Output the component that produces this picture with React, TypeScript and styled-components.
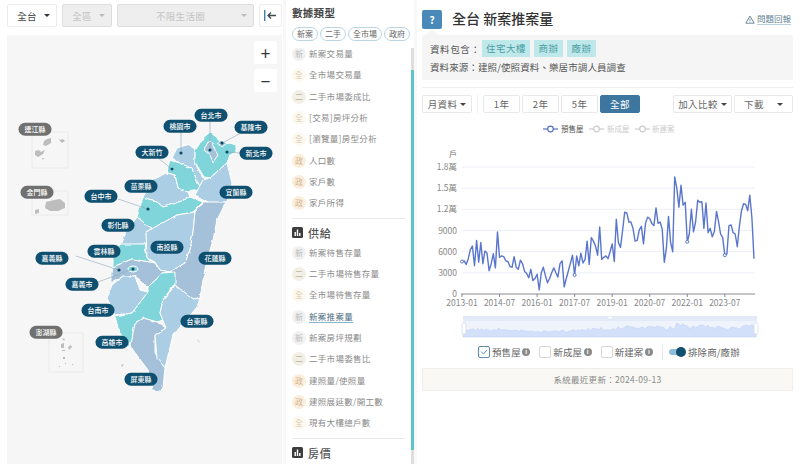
import React from "react"
import styled, { createGlobalStyle } from "styled-components"

const GlobalStyle = createGlobalStyle`
  html, body {
    margin: 0;
    padding: 0;
    background: #f8f8f8;
    font-family: "Noto Sans CJK TC", "Noto Sans", sans-serif;
    color: #555;
  }
  * { box-sizing: border-box; }
`

const Page = styled.div`
  display: flex;
  width: 800px;
  height: 464px;
  overflow: hidden;
  gap: 3px;
`

/* left column */
const LeftColumn = styled.div`
  width: 283px;
  background: #fff;
  padding: 4px 1px 0 7px;
  display: flex;
  flex-direction: column;
  gap: 8px;
`

const FilterBar = styled.div`
  display: flex;
  gap: 5px;
`

const SelectBox = styled.div<{ $w: number; $disabled?: boolean }>`
  width: ${(p) => p.$w}px;
  height: 23px;
  display: flex;
  align-items: center;
  justify-content: center;
  position: relative;
  font-size: 9.5px;
  letter-spacing: 0.3px;
  color: ${(p) => (p.$disabled ? "#c4c4c4" : "#444")};
  background: ${(p) => (p.$disabled ? "#eee" : "#fff")};
  border: 1px solid ${(p) => (p.$disabled ? "#ddd" : "#ececec")};
  border-radius: 2px;
  padding-right: 10px;
  &::after {
    content: "";
    position: absolute;
    right: 6px;
    top: 9px;
    border-left: 3px solid transparent;
    border-right: 3px solid transparent;
    border-top: 3px solid ${(p) => (p.$disabled ? "#bbb" : "#333")};
  }
`

const CollapseButton = styled.div`
  width: 23px;
  height: 23px;
  border: 1px solid #ececec;
  border-radius: 2px;
  display: flex;
  align-items: center;
  justify-content: center;
`

const MapPanel = styled.div`
  position: relative;
  flex: 1;
  background: #f6f6f6;
`

const MapDrawing = styled.svg`
  display: block;
  width: 275px;
  height: 429px;
`

const ZoomButton = styled.div<{ $top: number }>`
  position: absolute;
  right: 5px;
  top: ${(p) => p.$top}px;
  width: 23px;
  height: 23px;
  background: #fff;
  border-radius: 2px;
  display: flex;
  align-items: center;
  justify-content: center;
  font-size: 17px;
  line-height: 1;
  color: #333;
`

const CountyLabel = styled.div<{ $x: number; $y: number; $gray?: boolean }>`
  position: absolute;
  left: ${(p) => p.$x - 7}px;
  top: ${(p) => p.$y - 35}px;
  transform: translate(-50%, -50%);
  width: 33px;
  height: 12.5px;
  border-radius: 7px;
  background: ${(p) => (p.$gray ? "#707070" : "#0f5070")};
  color: #fff;
  font-size: 7px;
  font-weight: 500;
  line-height: 12.5px;
  text-align: center;
  white-space: nowrap;
`

/* middle column */
const MiddleColumn = styled.div`
  width: 128px;
  background: #fff;
  padding-top: 4px;
  display: flex;
  flex-direction: column;
`

const SideHeading = styled.div`
  margin-left: 6px;
  font-size: 10.5px;
  font-weight: 700;
  color: #444;
  line-height: 18px;
  letter-spacing: 0.3px;
`

const PillRow = styled.div`
  display: flex;
  flex: none;
  gap: 2px;
  margin: 5px 0 7px 6px;
`

const Pill = styled.div`
  height: 14px;
  padding: 0 4px;
  border: 1px solid #b9d5e4;
  border-radius: 7px;
  font-size: 8px;
  line-height: 12px;
  color: #666;
  white-space: nowrap;
`

const ListWrap = styled.div`
  flex: 1;
  display: flex;
  min-height: 0;
`

const TypeList = styled.div`
  width: 125px;
  padding: 0 6px;
  overflow: hidden;
`

const ListInner = styled.div`
  margin-top: -4.7px;
`

const TypeRow = styled.div`
  height: 21.33px;
  display: flex;
  align-items: center;
  gap: 3px;
`

const Badge = styled.span<{ $bg: string; $fg: string }>`
  width: 14px;
  height: 14px;
  flex: none;
  border-radius: 50%;
  background: ${(p) => p.$bg};
  color: ${(p) => p.$fg};
  font-size: 8px;
  line-height: 14px;
  text-align: center;
`

const TypeName = styled.span<{ $active?: boolean }>`
  font-size: 8.5px;
  letter-spacing: 0.3px;
  white-space: nowrap;
  color: ${(p) => (p.$active ? "#4b6c80" : "#8a8a8a")};
  border-bottom: 1px solid ${(p) => (p.$active ? "#86b5d0" : "transparent")};
  line-height: 11px;
`

const SectionRule = styled.div`
  height: 1px;
  background: #eaeaea;
  margin: 4px 0 5px;
`

const SectionHead = styled.div`
  display: flex;
  align-items: center;
  gap: 5px;
  height: 18px;
  font-size: 11px;
  letter-spacing: 0.8px;
  color: #555;
  font-weight: 500;
`

const SectionIcon = styled.svg`
  width: 11px;
  height: 11px;
`

const ScrollTrack = styled.div`
  width: 3px;
  background: #dedede;
`

const ScrollThumb = styled.div`
  width: 3px;
  height: 380px;
  margin-top: 22px;
  background: #5ec4cc;
`

/* right column */
const RightColumn = styled.div`
  width: 383px;
  flex: none;
  min-width: 0;
  background: #fff;
  padding: 9px 7px 0 5px;
`

const TitleRow = styled.div`
  display: flex;
  align-items: center;
  height: 20px;
`

const HelpButton = styled.div`
  width: 20px;
  height: 19px;
  background: #4a8ab8;
  border-radius: 2px;
  color: #fff;
  font-size: 10px;
  font-weight: 700;
  line-height: 19px;
  text-align: center;
  margin-right: 10px;
`

const PageTitle = styled.div`
  flex: 1;
  font-size: 14px;
  font-weight: 500;
  color: #333;
  white-space: nowrap;
  margin-bottom: 3px;
`

const ReportLink = styled.div`
  display: flex;
  align-items: center;
  gap: 2px;
  font-size: 8.5px;
  color: #5f7f94;
  margin-right: 2px;
  span {
    border-bottom: 1px solid #bcd0dc;
    line-height: 11px;
  }
`

const InfoPanel = styled.div`
  position: relative;
  margin-top: 6px;
  height: 45px;
  background: #f5f5f5;
  border-radius: 2px;
  padding: 5px 8px;
  font-size: 9.5px;
  color: #555;
  &::before {
    content: "";
    position: absolute;
    left: 4px;
    top: -6px;
    border-left: 6px solid transparent;
    border-right: 6px solid transparent;
    border-bottom: 6px solid #f5f5f5;
  }
`

const InfoRow = styled.div`
  display: flex;
  align-items: center;
  gap: 4px;
  white-space: nowrap;
  letter-spacing: 0.1px;
`

const InfoLabel = styled.span`
  width: 48px;
  letter-spacing: 0.6px;
`

const Tag = styled.span<{ $w: number }>`
  width: ${(p) => p.$w}px;
  height: 17px;
  background: #bfe8ea;
  color: #4a9da3;
  font-size: 9.5px;
  line-height: 17px;
  text-align: center;
  letter-spacing: 0.5px;
`

const SourceRow = styled(InfoRow)`
  margin-top: 3px;
  line-height: 14px;
`

const Rule = styled.div`
  height: 1px;
  background: #eee;
  margin: 7px 0;
`

const Toolbar = styled.div`
  display: flex;
  align-items: center;
  gap: 2px;
`

const ToolButton = styled.div<{ $w: number; $active?: boolean }>`
  width: ${(p) => p.$w}px;
  height: 18px;
  display: flex;
  align-items: center;
  justify-content: center;
  gap: 3px;
  font-size: 9.5px;
  letter-spacing: 0.4px;
  white-space: nowrap;
  border: 1px solid ${(p) => (p.$active ? "#3d769e" : "#e8e8e8")};
  border-radius: 2px;
  background: ${(p) => (p.$active ? "#3d769e" : "#fff")};
  color: ${(p) => (p.$active ? "#fff" : "#666")};
`

const Caret = styled.i`
  border-left: 3px solid transparent;
  border-right: 3px solid transparent;
  border-top: 3px solid #444;
`

const ToolDivider = styled.div`
  width: 1px;
  height: 18px;
  background: #eee;
  margin: 0 3px;
`

const ToolSpacer = styled.div`
  flex: 1;
`

const ChartDrawing = styled.svg`
  display: block;
  width: 371px;
  height: 228px;
  margin-top: 3px;
`

const OptionRow = styled.div`
  display: flex;
  align-items: center;
  margin-left: 56px;
  height: 16px;
  font-size: 9.5px;
  letter-spacing: 0.1px;
  color: #666;
  white-space: nowrap;
`

const CheckBox = styled.span<{ $on?: boolean }>`
  width: 12px;
  height: 12px;
  border: 1px solid ${(p) => (p.$on ? "#5f8fb0" : "#d5d5d5")};
  border-radius: 2px;
  margin-right: 2px;
  display: flex;
  align-items: center;
  justify-content: center;
`

const InfoDot = styled.span`
  width: 8px;
  height: 8px;
  border-radius: 50%;
  background: #8a8a8a;
  color: #fff;
  font-size: 6px;
  font-weight: 700;
  line-height: 8px;
  text-align: center;
  margin: 0 9px 0 1.5px;
`

const OptionDivider = styled.div`
  width: 1px;
  height: 15px;
  background: #e6e6e6;
  margin-right: 6px;
`

const Switch = styled.span`
  position: relative;
  width: 16px;
  height: 6px;
  border-radius: 3px;
  background: #8fbcd8;
  margin-right: 3px;
  &::after {
    content: "";
    position: absolute;
    right: -1px;
    top: -2px;
    width: 10px;
    height: 10px;
    border-radius: 50%;
    background: #0f5070;
  }
`

const UpdateNote = styled.div`
  margin-top: 8px;
  height: 23px;
  background: #f9f8f4;
  border: 1px solid #f0efeb;
  font-size: 8.5px;
  line-height: 21px;
  text-align: center;
  color: #8a8a8a;
  letter-spacing: 0.3px;
`

type County = { pts: string; fill: string }

const LIGHT = "#abcee5"
const TEAL = "#80d5da"
const DARK = "#a4c1d9"

const counties: County[] = [
  { fill: LIGHT, pts: "172,158 177,148 190,144 195,150 195,162 197,167 204,180 199,186 192,169 180,163" },
  { fill: TEAL, pts: "195,151 203,138 210,132 220,140 218,145 230,143 236,145 236,152 230,155 227,163 210,178 204,177 195,162" },
  { fill: DARK, pts: "204,150 208,142 213,143 215,150 218,155 213,162 210,155" },
  { fill: DARK, pts: "217,143 221,140 227,143 222,147" },
  { fill: TEAL, pts: "166,173 170,160 180,163 192,169 200,187 198,190 188,192 178,188 175,175 167,173" },
  { fill: LIGHT, pts: "143,197 153,180 166,173 175,175 178,188 188,192 190,197 177,203 163,207 157,202" },
  { fill: TEAL, pts: "137,217 143,197 157,202 163,207 177,203 190,197 203,202 193,212 177,215 160,225 153,230 140,220" },
  { fill: LIGHT, pts: "227,163 232,183 227,202 210,203 195,195 203,180 210,178" },
  { fill: LIGHT, pts: "137,217 147,225 152,228 146,232 147,244 120,245 115,257 125,233" },
  { fill: TEAL, pts: "120,244 145,244 147,259 155,263 132,259 113,267 113,257" },
  { fill: LIGHT, pts: "146,232 177,215 195,212 193,232 190,250 185,263 170,272 160,270 155,262 147,258" },
  { fill: DARK, pts: "203,202 226,202 217,220 213,240 208,257 204,273 207,270 203,280 200,298 195,300 177,288 173,280 170,272 185,263 190,250 193,232 195,212" },
  { fill: DARK, pts: "113,267 132,259 155,263 160,270 170,272 163,273 148,287 140,280 135,276 123,276 112,283 112,273" },
  { fill: LIGHT, pts: "107,298 112,285 123,276 135,276 140,290 148,292 132,313 115,315" },
  { fill: TEAL, pts: "115,316 132,313 148,292 148,287 163,273 175,272 175,283 163,300 160,313 163,320 157,322 143,318 135,323 132,340 128,348 118,328" },
  { fill: DARK, pts: "135,323 143,318 157,322 166,328 155,335 155,353 165,368 163,388 160,391 152,390 148,370 133,350 131,345" },
  { fill: LIGHT, pts: "175,285 195,300 200,298 197,307 182,325 173,335 165,368 157,358 155,335 166,328 160,313 163,300 173,288" },
]

const labels: { name: string; x: number; y: number; gray?: boolean }[] = [
  { name: "台北市", x: 211, y: 115 },
  { name: "桃園市", x: 180, y: 126 },
  { name: "基隆市", x: 251, y: 127 },
  { name: "新北市", x: 256, y: 153 },
  { name: "大新竹", x: 152, y: 152 },
  { name: "苗栗縣", x: 141, y: 186 },
  { name: "宜蘭縣", x: 236, y: 192 },
  { name: "台中市", x: 101, y: 196 },
  { name: "彰化縣", x: 118, y: 225 },
  { name: "南投縣", x: 167, y: 247 },
  { name: "雲林縣", x: 104, y: 251 },
  { name: "花蓮縣", x: 215, y: 258 },
  { name: "嘉義縣", x: 52, y: 258 },
  { name: "嘉義市", x: 82, y: 284 },
  { name: "台南市", x: 98, y: 310 },
  { name: "台東縣", x: 197, y: 321 },
  { name: "高雄市", x: 112, y: 342 },
  { name: "屏東縣", x: 141, y: 379 },
  { name: "連江縣", x: 35, y: 129, gray: true },
  { name: "金門縣", x: 37, y: 192, gray: true },
  { name: "澎湖縣", x: 46, y: 332, gray: true },
]

const leaders = [
  [210, 121, 210, 150],
  [181, 132, 181, 153],
  [243, 132, 222, 143],
  [240, 153, 227, 152],
  [158, 158, 172, 169],
  [118, 199, 148, 209],
  [76, 256, 119, 270],
  [98, 282, 133, 269],
]

const Taiwan = () => (
  <MapDrawing viewBox="7 35 275 429">
    <defs>
      <filter id="coast" x="-5%" y="-5%" width="110%" height="110%">
        <feTurbulence type="fractalNoise" baseFrequency="0.14" numOctaves="2" seed="4" />
        <feDisplacementMap in="SourceGraphic" scale="3" xChannelSelector="R" yChannelSelector="G" />
      </filter>
    </defs>
    <g filter="url(#coast)">
      {counties.map((c, i) => (
        <polygon key={i} points={c.pts} fill={c.fill} stroke="#fff" strokeWidth={1} strokeLinejoin="round" />
      ))}
    </g>
    <ellipse cx={133} cy={269} rx={5} ry={3} fill={TEAL} stroke="#fff" strokeWidth={1} />
    <circle cx={172} cy={169} r={1.5} fill="#fff" />

    <g stroke="#8fa9ba" strokeWidth={0.6}>
      {leaders.map((l, i) => (
        <line key={i} x1={l[0]} y1={l[1]} x2={l[2]} y2={l[3]} />
      ))}
    </g>
    <g fill="#0f4a66">
      {[
        [210, 150], [181, 153], [222, 143], [227, 152], [172, 169], [148, 209],
        [119, 270], [133, 269],
      ].map((d, i) => (
        <circle key={i} cx={d[0]} cy={d[1]} r={1.6} />
      ))}
    </g>

    <g fill="none" stroke="#e8e8e8" strokeWidth={0.8}>
      <rect x={32} y={132} width={36} height={36} />
      <rect x={32} y={191} width={36} height={24} />
      <rect x={49} y={333} width={34} height={39} />
    </g>
    <g fill="#bdbdbd">
      <polygon points="44,141 47,139 51,138 51,143 46,146 43,145" />
      <polygon points="58,138 60,140 63,139 65,141 62,143 60,141" />
      <polygon points="35,151 39,150 41,152 45,150 43,154 38,157 35,155" />
      <polygon points="42,158 44,158 43,160" />
      <polygon points="46,202 54,200 60,199 65,203 65,208 58,211 50,211 45,208" />
      <polygon points="35,210 39,209 39,213 35,214" />
      <polygon points="62,338 65,339 64,341" />
      <polygon points="61,344 64,343 64,348 61,348" />
      <polygon points="68,347 71,345 72,347 69,350" />
      <rect x={62} y={350} width={3} height={1} />
      <rect x={63} y={357} width={2} height={2} />
      <rect x={59} y={366} width={1} height={1} />
      <rect x={65} y={363} width={1} height={1} />
      <rect x={72} y={364} width={1} height={1} />
      <polygon points="121,365 124,364 122,367" />
      <polygon points="197,339 199,341 200,343 198,341" />
    </g>
  </MapDrawing>
)

const BADGE = {
  新: { bg: "#f1f1f1", fg: "#bbb" },
  全: { bg: "#fdf9f0", fg: "#d8cdb0" },
  二: { bg: "#f2f0e6", fg: "#bdb69f" },
  政: { bg: "#fbeedd", fg: "#d5b792" },
}

type BadgeKey = keyof typeof BADGE

const demandRows: [BadgeKey, string][] = [
  ["新", "新案交易量"],
  ["全", "全市場交易量"],
  ["二", "二手市場委成比"],
  ["全", "[交易]房坪分析"],
  ["全", "[瀏覽量]房型分析"],
  ["政", "人口數"],
  ["政", "家戶數"],
  ["政", "家戶所得"],
]

const supplyRows: [BadgeKey, string][] = [
  ["新", "新案待售存量"],
  ["二", "二手市場待售存量"],
  ["全", "全市場待售存量"],
  ["新", "新案推案量"],
  ["新", "新案房坪規劃"],
  ["二", "二手市場委售比"],
  ["政", "建照量/使照量"],
  ["政", "建照展延數/開工數"],
  ["全", "現有大樓總戶數"],
]

const Rows = ({ rows }: { rows: [BadgeKey, string][] }) => (
  <>
    {rows.map(([k, name]) => (
      <TypeRow key={name}>
        <Badge $bg={BADGE[k].bg} $fg={BADGE[k].fg}>{k}</Badge>
        <TypeName $active={name === "新案推案量"}>{name}</TypeName>
      </TypeRow>
    ))}
  </>
)

const BarIcon = () => (
  <SectionIcon viewBox="0 0 11 11">
    <rect width={11} height={11} rx={1.5} fill="#3c3c3c" />
    <rect x={2.5} y={5} width={1.4} height={4} fill="#fff" />
    <rect x={4.8} y={2.5} width={1.4} height={6.5} fill="#fff" />
    <rect x={7.1} y={6} width={1.4} height={3} fill="#fff" />
  </SectionIcon>
)

const series = [
  4600, 4700, 4200, 5000, 6300, 6800, 4000, 7600, 4500, 7300, 4300, 6100, 5800, 3300, 4300, 5700, 3700, 8800,
  5200, 5400, 5300, 4700, 4600, 3900, 3800, 5300, 3800, 3500, 4800, 4300, 3200, 2900, 2300, 3500, 1900, 2200,
  2800, 600, 3000, 3800, 2600, 1600, 2200, 3000, 3700, 3000, 2400, 4300, 4700, 1000, 2200, 3300, 4400, 5500,
  2700, 5400, 4000, 5800, 4400, 4900, 7500, 4200, 8000, 7500, 6800, 5500, 9500, 4900, 5200, 5400, 5000, 6000,
  7100, 4600, 10600, 7300, 6600, 9000, 11600, 11500, 10200, 10200, 9300, 7500, 7600, 9100, 9600, 7100, 10000,
  10900, 10700, 10000, 9700, 12200, 10000, 10200, 9200, 4500, 6500, 11000, 7300, 6000, 16600, 15000, 12300,
  15400, 12600, 13000, 7400, 8500, 12000, 8800, 10200, 13300, 13000, 13100, 9300, 12900, 8700, 9300, 8100, 8900,
  11700, 10300, 8500, 8000, 5500, 5700, 9700, 9800, 8700, 8500, 6700, 9600, 11800, 12800, 12700, 11800, 14000,
  10800, 5000,
]

// chart coordinates follow the page, the svg starts at (422, 117)
const X0 = 462
const STEP = 292 / 140
const Y0 = 295
const PER = 127 / 18000

const px = (i: number) => X0 + i * STEP
const py = (v: number) => Y0 - v * PER

const linePath = series.map((v, i) => `${i ? "L" : "M"}${px(i).toFixed(1)} ${py(v).toFixed(1)}`).join(" ")

const SX = 293 / 140
const brushPath =
  "M463 338 " +
  series.map((v, i) => `L${(463 + i * SX).toFixed(1)} ${(334 - v * 0.0006).toFixed(1)}`).join(" ") +
  " L756 338 Z"

const yTicks: [string, number][] = [
  ["1.8萬", 18000],
  ["1.5萬", 15000],
  ["1.2萬", 12000],
  ["9000", 9000],
  ["6000", 6000],
  ["3000", 3000],
  ["0", 0],
]

const xTicks = ["2013-01", "2014-07", "2016-01", "2017-07", "2019-01", "2020-07", "2022-01", "2023-07"]

const LegendMark = ({ x, color }: { x: number; color: string }) => (
  <g fill="none" stroke={color} strokeWidth={1.2}>
    <line x1={x} y1={130} x2={x + 15} y2={130} />
    <circle cx={x + 7.5} cy={130} r={2.8} fill="#fff" />
  </g>
)

const Chart = () => (
  <ChartDrawing viewBox="422 117 371 228" fontFamily='"Noto Sans CJK TC", "Noto Sans", sans-serif'>
    <LegendMark x={543} color="#5470c6" />
    <text x={561} y={133} fontSize={7.5} fill="#555">預售屋</text>
    <LegendMark x={589} color="#ccc" />
    <text x={607} y={133} fontSize={7.5} fill="#ccc">新成屋</text>
    <LegendMark x={635} color="#ccc" />
    <text x={652} y={133} fontSize={7.5} fill="#ccc">新建案</text>

    <text x={449} y={158} fontSize={8} fill="#777">戶</text>
    {yTicks.map(([label, v]) => (
      <g key={label}>
        {v > 0 && <line x1={462} y1={py(v)} x2={755} y2={py(v)} stroke="#e8ebf4" strokeWidth={0.8} />}
        <text x={457} y={py(v) + 3} fontSize={8.5} fill="#888" textAnchor="end">{label}</text>
      </g>
    ))}
    <line x1={461} y1={295} x2={755} y2={295} stroke="#6e7079" strokeWidth={0.8} />
    {xTicks.map((t, i) => (
      <g key={t}>
        <line x1={px(i * 18)} y1={295} x2={px(i * 18)} y2={298} stroke="#6e7079" strokeWidth={0.8} />
        <text x={px(i * 18)} y={307} fontSize={8.5} fill="#888" textAnchor="middle">{t}</text>
      </g>
    ))}
    <path d={linePath} fill="none" stroke="#5a76cc" strokeWidth={1.4} strokeLinejoin="round" />
    {[0, 54, 108, 126].map((i) => (
      <circle key={i} cx={px(i)} cy={py(series[i])} r={1.5} fill="#fff" stroke="#5a76cc" strokeWidth={1} />
    ))}

    <rect x={463} y={317} width={294} height={21} fill="#e2e9f7" />
    <rect x={463} y={322} width={294} height={16} fill="#eff3fc" />
    <path d={brushPath} fill="#d3e0fa" stroke="#bccdf2" strokeWidth={0.5} />
    <rect x={608} y={318} width={4} height={1.5} fill="#fff" />
    <rect x={462} y={324} width={4} height={11} rx={1.5} fill="#fff" stroke="#c5cfe2" strokeWidth={0.6} />
    <rect x={754} y={324} width={4} height={11} rx={1.5} fill="#fff" stroke="#c5cfe2" strokeWidth={0.6} />
  </ChartDrawing>
)

const App: React.FC = () => {
  return (
    <Page>
      <GlobalStyle />
      <LeftColumn>
        <FilterBar>
          <SelectBox $w={50}>全台</SelectBox>
          <SelectBox $w={50} $disabled>全區</SelectBox>
          <SelectBox $w={137} $disabled>不限生活圈</SelectBox>
          <CollapseButton>
            <svg width="15" height="13" viewBox="0 0 15 13">
              <rect x="1" y="1" width="1.4" height="11" fill="#3f7fa8" />
              <path d="M13 6.5H5M8 3.5L5 6.5L8 9.5" fill="none" stroke="#3c4a54" strokeWidth="1.3" />
            </svg>
          </CollapseButton>
        </FilterBar>
        <MapPanel>
          <Taiwan />
          <ZoomButton $top={6}>+</ZoomButton>
          <ZoomButton $top={34}>−</ZoomButton>
          {labels.map((l) => (
            <CountyLabel key={l.name} $x={l.x} $y={l.y} $gray={l.gray}>{l.name}</CountyLabel>
          ))}
        </MapPanel>
      </LeftColumn>

      <MiddleColumn>
        <SideHeading>數據類型</SideHeading>
        <PillRow>
          <Pill>新案</Pill>
          <Pill>二手</Pill>
          <Pill>全市場</Pill>
          <Pill>政府</Pill>
        </PillRow>
        <ListWrap>
          <TypeList>
            <ListInner>
              <Rows rows={demandRows} />
              <SectionRule />
              <SectionHead><BarIcon />供給</SectionHead>
              <Rows rows={supplyRows} />
              <SectionRule />
              <SectionHead><BarIcon />房價</SectionHead>
            </ListInner>
          </TypeList>
          <ScrollTrack>
            <ScrollThumb />
          </ScrollTrack>
        </ListWrap>
      </MiddleColumn>

      <RightColumn>
        <TitleRow>
          <HelpButton>?</HelpButton>
          <PageTitle>全台 新案推案量</PageTitle>
          <ReportLink>
            <svg width="10" height="9" viewBox="0 0 10 9">
              <path d="M5 1L9.2 8.2H.8Z" fill="none" stroke="#5f7f94" strokeWidth="0.9" />
              <path d="M5 3.5V6M5 6.6V7.4" stroke="#5f7f94" strokeWidth="0.8" />
            </svg>
            <span>問題回報</span>
          </ReportLink>
        </TitleRow>
        <InfoPanel>
          <InfoRow>
            <InfoLabel>資料包含：</InfoLabel>
            <Tag $w={48}>住宅大樓</Tag>
            <Tag $w={29}>商辦</Tag>
            <Tag $w={29}>廠辦</Tag>
          </InfoRow>
          <SourceRow>資料來源：建照/使照資料、樂居市調人員調查</SourceRow>
        </InfoPanel>
        <Rule />
        <Toolbar>
          <ToolButton $w={50}>月資料<Caret /></ToolButton>
          <ToolDivider />
          <ToolButton $w={37}>1年</ToolButton>
          <ToolButton $w={37}>2年</ToolButton>
          <ToolButton $w={37}>5年</ToolButton>
          <ToolButton $w={40} $active>全部</ToolButton>
          <ToolSpacer />
          <ToolButton $w={59}>加入比較<Caret /></ToolButton>
          <ToolButton $w={59}>下載&nbsp;&nbsp;&nbsp;&nbsp;<Caret /></ToolButton>
        </Toolbar>
        <Chart />
        <OptionRow>
          <CheckBox $on>
            <svg width="8" height="6" viewBox="0 0 8 6">
              <path d="M1 2.5L3.5 5L7 1" fill="none" stroke="#5f8fb0" strokeWidth="0.9" />
            </svg>
          </CheckBox>
          預售屋<InfoDot>i</InfoDot>
          <CheckBox />新成屋<InfoDot>i</InfoDot>
          <CheckBox />新建案<InfoDot>i</InfoDot>
          <OptionDivider />
          <Switch />排除商/廠辦
        </OptionRow>
        <UpdateNote>系統最近更新：2024-09-13</UpdateNote>
      </RightColumn>
    </Page>
  )
}

export default App
